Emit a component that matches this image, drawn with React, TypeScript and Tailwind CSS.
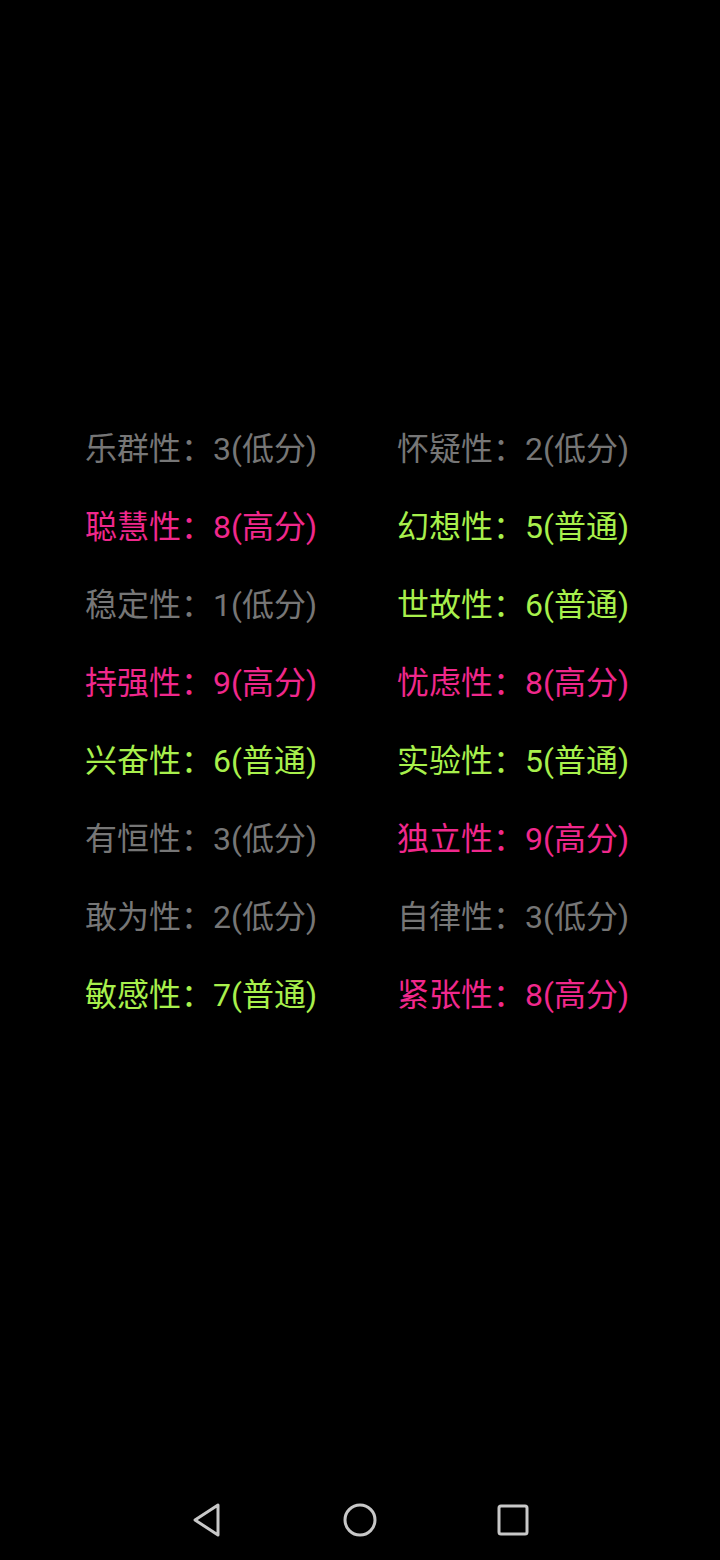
const GRAY = 'text-[#767676]';
const PINK = 'text-[#f0288c]';
const GREEN = 'text-[#a8f04c]';

type Trait = { name: string; score: number; level: '低分' | '高分' | '普通' };

const rows: [Trait, Trait][] = [
  [{ name: '乐群性', score: 3, level: '低分' }, { name: '怀疑性', score: 2, level: '低分' }],
  [{ name: '聪慧性', score: 8, level: '高分' }, { name: '幻想性', score: 5, level: '普通' }],
  [{ name: '稳定性', score: 1, level: '低分' }, { name: '世故性', score: 6, level: '普通' }],
  [{ name: '持强性', score: 9, level: '高分' }, { name: '忧虑性', score: 8, level: '高分' }],
  [{ name: '兴奋性', score: 6, level: '普通' }, { name: '实验性', score: 5, level: '普通' }],
  [{ name: '有恒性', score: 3, level: '低分' }, { name: '独立性', score: 9, level: '高分' }],
  [{ name: '敢为性', score: 2, level: '低分' }, { name: '自律性', score: 3, level: '低分' }],
  [{ name: '敏感性', score: 7, level: '普通' }, { name: '紧张性', score: 8, level: '高分' }],
];

const colorFor = (level: Trait['level']) =>
  level === '高分' ? PINK : level === '普通' ? GREEN : GRAY;

function Cell({ t }: { t: Trait }) {
  return (
    <div className={`h-[78px] flex items-center text-[32px] leading-none whitespace-nowrap ${colorFor(t.level)}`}>
      {t.name}：{t.score}({t.level})
    </div>
  );
}

export default function App() {
  return (
    <div
      className="min-h-[1560px] h-[1560px] bg-black flex flex-col"
      style={{ fontFamily: 'Roboto, "Noto Sans CJK SC", sans-serif' }}
    >
      <main className="flex-1 pt-[410px] pl-[85px]">
        <div className="grid grid-cols-[312px_312px]">
          {rows.map(([a, b], i) => (
            <div key={i} className="contents">
              <Cell t={a} />
              <Cell t={b} />
            </div>
          ))}
        </div>
      </main>

      {/* nav bar */}
      <nav className="h-[80px] flex items-center justify-center gap-[105px]">
        <div className="w-[48px] h-[48px] flex items-center justify-center">
          <svg width="34" height="36" viewBox="0 0 34 36" fill="none" stroke="#c8c8c8" strokeWidth="3" strokeLinejoin="round">
            <path d="M28 3 L28 33 L5 18 Z" />
          </svg>
        </div>
        <div className="w-[48px] h-[48px] flex items-center justify-center">
          <svg width="36" height="36" viewBox="0 0 36 36" fill="none" stroke="#c8c8c8" strokeWidth="3">
            <circle cx="18" cy="18" r="15" />
          </svg>
        </div>
        <div className="w-[48px] h-[48px] flex items-center justify-center">
          <svg width="34" height="34" viewBox="0 0 34 34" fill="none" stroke="#c8c8c8" strokeWidth="3">
            <rect x="3" y="3" width="28" height="28" rx="2" />
          </svg>
        </div>
      </nav>
    </div>
  );
}
